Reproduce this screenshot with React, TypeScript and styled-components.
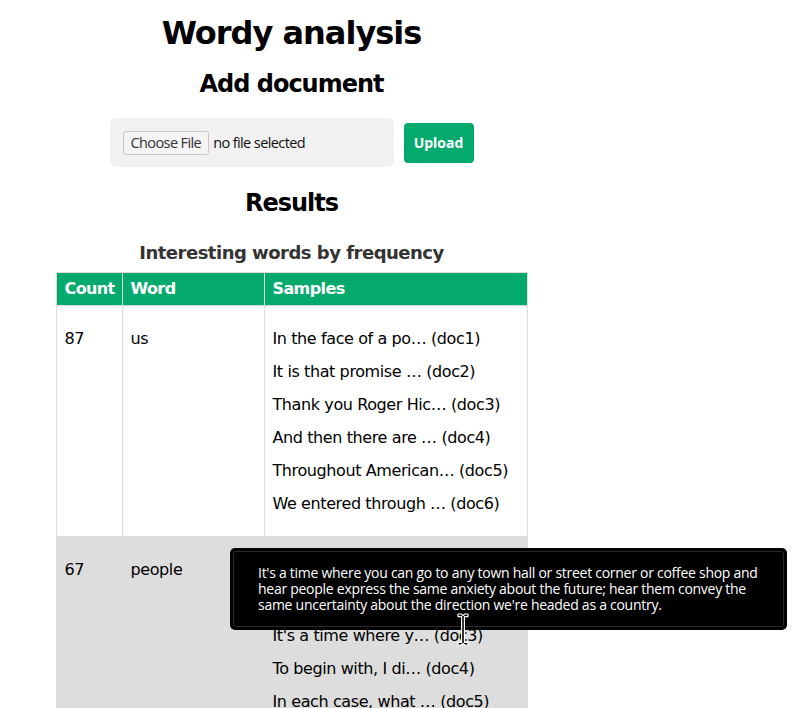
import React from 'react';
import styled, {createGlobalStyle} from "styled-components";

const GlobalStyle = createGlobalStyle`
  body {
    margin: 0;
    font-family: "DejaVu Sans", sans-serif;
    color: #000;
    background: #fff;
  }
`

type Row = { count: number, word: string, samples: { text: string, doc: string }[] }

const rows: Row[] = [
    {
        count: 87, word: 'us', samples: [
            {text: 'In the face of a po…', doc: 'doc1'},
            {text: 'It is that promise …', doc: 'doc2'},
            {text: 'Thank you Roger Hic…', doc: 'doc3'},
            {text: 'And then there are …', doc: 'doc4'},
            {text: 'Throughout American…', doc: 'doc5'},
            {text: 'We entered through …', doc: 'doc6'},
        ]
    },
    {
        count: 67, word: 'people', samples: [
            {text: 'So the American peo…', doc: 'doc1'},
            {text: 'And what the people…', doc: 'doc2'},
            {text: "It's a time where y…", doc: 'doc3'},
            {text: 'To begin with, I di…', doc: 'doc4'},
            {text: 'In each case, what …', doc: 'doc5'},
            {text: 'These are the peopl…', doc: 'doc6'},
        ]
    },
    {
        count: 54, word: 'american', samples: [
            {text: 'The American dream …', doc: 'doc1'},
            {text: 'Every American shou…', doc: 'doc2'},
        ]
    },
]

const tooltipText = "It's a time where you can go to any town hall or street corner or coffee shop and hear people express the same anxiety about the future; hear them convey the same uncertainty about the direction we're headed as a country."

const App = () => {
    return (
        <Page>
            <GlobalStyle/>
            <Main>
                <Title>Wordy analysis</Title>
                <SectionTitle>Add document</SectionTitle>
                <UploadForm>
                    <FileBox>
                        <ChooseButton type="button">Choose File</ChooseButton>
                        <FileName>no file selected</FileName>
                    </FileBox>
                    <UploadButton type="button">Upload</UploadButton>
                </UploadForm>
                <ResultsTitle>Results</ResultsTitle>
                <TableTitle>Interesting words by frequency</TableTitle>
                <Table>
                    <colgroup>
                        <Col $w={66}/>
                        <Col $w={142}/>
                        <Col $w={263}/>
                    </colgroup>
                    <thead>
                    <tr>
                        <Th>Count</Th>
                        <Th>Word</Th>
                        <Th>Samples</Th>
                    </tr>
                    </thead>
                    <tbody>
                    {rows.map((r, i) => (
                        <Tr key={r.word} $hovered={i === 1}>
                            <Td>{r.count}</Td>
                            <Td>{r.word}</Td>
                            <Td>
                                {r.samples.map(s => (
                                    <Sample key={s.doc}>{s.text} ({s.doc})</Sample>
                                ))}
                            </Td>
                        </Tr>
                    ))}
                    </tbody>
                </Table>
            </Main>
            <Tooltip>{tooltipText}</Tooltip>
            <Cursor width="12" height="33" viewBox="0 0 12 33">
                <path d="M1 1h3.2l1.8 1.6L7.8 1H11v2.6H7.4v25.8H11V32H7.8L6 30.4 4.2 32H1v-2.6h3.6V3.6H1z"
                      fill="#000" stroke="#fff" strokeWidth="1.2" strokeLinejoin="round"/>
            </Cursor>
        </Page>
    );
};

export default App;

const Page = styled.div`
  position: relative;
  padding: 15px 8px 0;
  height: 708px;
  overflow: hidden;
  box-sizing: border-box;
`

const Main = styled.main`
  width: 567px;
  text-align: center;
`

const Title = styled.h1`
  font-size: 32px;
  line-height: 37px;
  letter-spacing: -1px;
  margin: 0;
`

const SectionTitle = styled.h2`
  font-size: 24px;
  line-height: 28px;
  letter-spacing: -1px;
  margin: 18px 0 0;
`

const ResultsTitle = styled(SectionTitle)`
  margin-top: 22px;
`

const UploadForm = styled.form`
  display: flex;
  justify-content: center;
  align-items: center;
  gap: 10px;
  margin-top: 20px;
`

const FileBox = styled.div`
  width: 284px;
  height: 49px;
  box-sizing: border-box;
  background: #f1f1f1;
  border-radius: 6px;
  display: flex;
  align-items: center;
  padding-left: 13px;
  gap: 4px;
  font-family: "Open Sans", sans-serif;
  font-size: 14.5px;
  letter-spacing: -0.6px;
`

const ChooseButton = styled.button`
  font-family: "Open Sans", sans-serif;
  font-size: 14.5px;
  letter-spacing: -0.6px;
  height: 24px;
  padding: 0 7px;
  color: #333;
  background: #f4f4f4;
  border: 1px solid #c8c8c8;
  border-radius: 3px;
`

const FileName = styled.span`
  color: #111;
`

const UploadButton = styled.button`
  width: 70px;
  height: 40px;
  background: #04aa6d;
  color: #fff;
  border: none;
  border-radius: 4px;
  font-family: "Open Sans", sans-serif;
  font-weight: 700;
  font-size: 14px;
`

const TableTitle = styled.h3`
  font-size: 18px;
  line-height: 22px;
  letter-spacing: -0.5px;
  color: #333;
  margin: 25px 0 8px;
`

const Table = styled.table`
  border-collapse: collapse;
  table-layout: fixed;
  width: 471px;
  margin: 0 auto;
  text-align: left;
  font-size: 16px;
  letter-spacing: -0.4px;
`

const Col = styled.col<{ $w: number }>`
  width: ${p => p.$w}px;
`

const Th = styled.th`
  background: #04aa6d;
  color: #fff;
  border: 1px solid #ddd;
  padding: 7px 8px;
  line-height: 18px;
  font-weight: 700;
  letter-spacing: -0.6px;
`

const Tr = styled.tr<{ $hovered?: boolean }>`
  background: ${p => p.$hovered ? '#ddd' : '#fff'};
  &:hover {
    background: #ddd;
  }
`

const Td = styled.td`
  border: 1px solid #ddd;
  padding: 16px 8px;
  line-height: 33px;
  vertical-align: top;
`

const Sample = styled.div`
  white-space: nowrap;
`

const Tooltip = styled.div`
  position: absolute;
  left: 230px;
  top: 548px;
  width: 557px;
  height: 82px;
  box-sizing: border-box;
  padding: 17px 20px 0 28px;
  background: #000;
  color: #fff;
  border-radius: 5px;
  font-family: "Open Sans", sans-serif;
  font-size: 14px;
  letter-spacing: -0.27px;
  line-height: 16px;

  &::before {
    content: "";
    position: absolute;
    inset: 3px;
    border: 1px solid #2a2a2a;
    border-radius: 3px;
  }
`

const Cursor = styled.svg`
  position: absolute;
  left: 457px;
  top: 613px;
`
